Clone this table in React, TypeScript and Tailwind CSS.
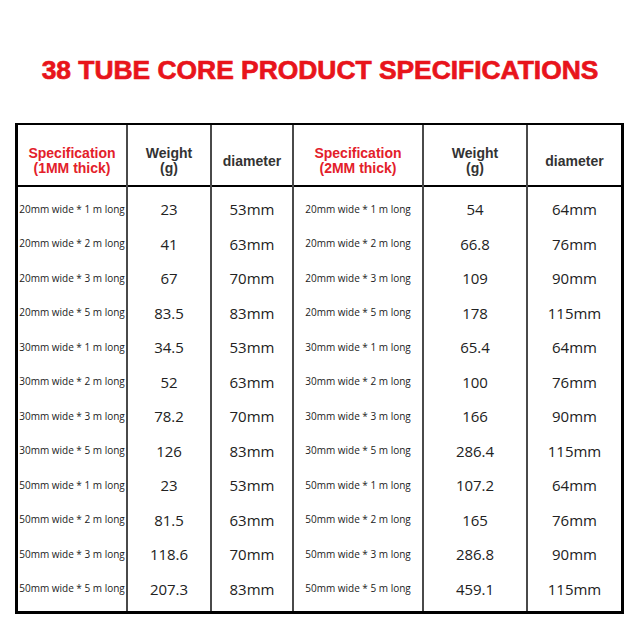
const specs = ['20', '30', '50'].flatMap((w) =>
  ['1', '2', '3', '5'].map((l) => `${w}mm wide * ${l} m long`)
);

const weight1 = ['23', '41', '67', '83.5', '34.5', '52', '78.2', '126', '23', '81.5', '118.6', '207.3'];
const weight2 = ['54', '66.8', '109', '178', '65.4', '100', '166', '286.4', '107.2', '165', '286.8', '459.1'];
const dia1 = ['53mm', '63mm', '70mm', '83mm'];
const dia2 = ['64mm', '76mm', '90mm', '115mm'];
const diameter1 = [...dia1, ...dia1, ...dia1];
const diameter2 = [...dia2, ...dia2, ...dia2];

interface Col {
  width: string;
  head: React.ReactNode;
  values: string[];
  small?: boolean;
  last?: boolean;
}

const SpecHead = ({ mm }: { mm: string }) => (
  <span className="text-[#e3202a]">
    Specification
    <br />({mm} thick)
  </span>
);

const WeightHead = () => (
  <span>
    Weight
    <br />
    (g)
  </span>
);

const columns: Col[] = [
  { width: 'w-[110px]', head: <SpecHead mm="1MM" />, values: specs, small: true },
  { width: 'w-[84px]', head: <WeightHead />, values: weight1 },
  { width: 'w-[82px]', head: <span>diameter</span>, values: diameter1 },
  { width: 'w-[130px]', head: <SpecHead mm="2MM" />, values: specs, small: true },
  { width: 'w-[104px]', head: <WeightHead />, values: weight2 },
  { width: 'w-[93px]', head: <span>diameter</span>, values: diameter2, last: true },
];

export default function App() {
  return (
    <div className="w-[640px] h-[640px] bg-white overflow-hidden">
      <h1 className="pt-[54px] text-center text-[26.4px] leading-[32px] font-bold text-[#e8141b] [-webkit-text-stroke:0.7px_#e8141b] font-['Liberation_Sans',Arial,sans-serif]">
        38 TUBE CORE PRODUCT SPECIFICATIONS
      </h1>

      <div className="mt-[37px] ml-[15px] w-[609px] flex border-black border-t-2 border-l-[3px] border-r-[3px] border-b-[3px]">
        {columns.map((col, ci) => (
          <div
            key={ci}
            className={`${col.width} flex flex-col ${col.last ? '' : 'border-r-2 border-[#4a4a4a]'}`}
          >
            {/* header */}
            <div className="h-[62px] pt-[12px] flex items-center justify-center text-center border-b-2 border-b-black text-[14px] leading-[15px] font-bold text-[#333] font-['Liberation_Sans',Arial,sans-serif]">
              {col.head}
            </div>
            {/* body */}
            <div className="py-[5px] flex flex-col">
              {col.values.map((v, i) => (
                <div
                  key={i}
                  className={`h-[34.5px] flex items-center justify-center whitespace-nowrap text-[#222] font-['Open_Sans',sans-serif] ${
                    col.small ? 'text-[10px]' : 'text-[15px]'
                  }`}
                >
                  {v}
                </div>
              ))}
            </div>
          </div>
        ))}
      </div>
    </div>
  );
}
